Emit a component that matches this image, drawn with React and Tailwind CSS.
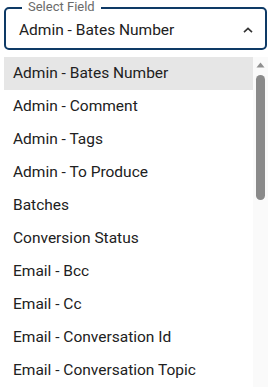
import React from 'react';

const fields = [
  'Admin - Bates Number',
  'Admin - Comment',
  'Admin - Tags',
  'Admin - To Produce',
  'Batches',
  'Conversion Status',
  'Email - Bcc',
  'Email - Cc',
  'Email - Conversation Id',
  'Email - Conversation Topic',
];

export default function App() {
  return (
    <div className="w-[278px] h-[387px] bg-white overflow-hidden font-['Roboto',sans-serif] text-[#212121]">
      {/* Select field */}
      <div className="pt-[7px] pl-1">
        <div className="relative w-[263px] h-[43px] border-2 border-[#0e3a66] rounded-[5px] flex items-center pl-[13px] pr-[12px]">
          <span className="absolute -top-[10px] left-[16px] px-[6px] bg-white text-[13px] leading-[16px] text-[#6b6b6b]">
            Select Field
          </span>
          <span className="flex-1 text-[15.5px] pt-[4px]">Admin - Bates Number</span>
          <svg width="10" height="6" viewBox="0 0 10 6" className="mt-[3px]">
            <path d="M1 5.2 L5 1.4 L9 5.2" fill="none" stroke="#333" strokeWidth="1.6" />
          </svg>
        </div>
      </div>

      {/* Options list */}
      <div className="mt-[7px] ml-1 w-[264px] flex">
        <ul className="flex-1">
          {fields.map((f, i) => (
            <li
              key={f}
              className={`h-[33px] flex items-center pl-[9px] pt-[1px] text-[15.5px] ${i === 0 ? 'bg-[#e6e6e6]' : ''}`}
            >
              {f}
            </li>
          ))}
        </ul>
        <div className="w-[15px] bg-[#fafafa] flex flex-col items-center pt-[5px]">
          <svg width="9" height="6" viewBox="0 0 9 6">
            <path d="M4.5 0.5 L8.5 5.5 L0.5 5.5 Z" fill="#8f8f8f" />
          </svg>
          <div className="mt-[7px] w-[9px] h-[125px] rounded-full bg-[#8a8a8a]" />
        </div>
      </div>
    </div>
  );
}
